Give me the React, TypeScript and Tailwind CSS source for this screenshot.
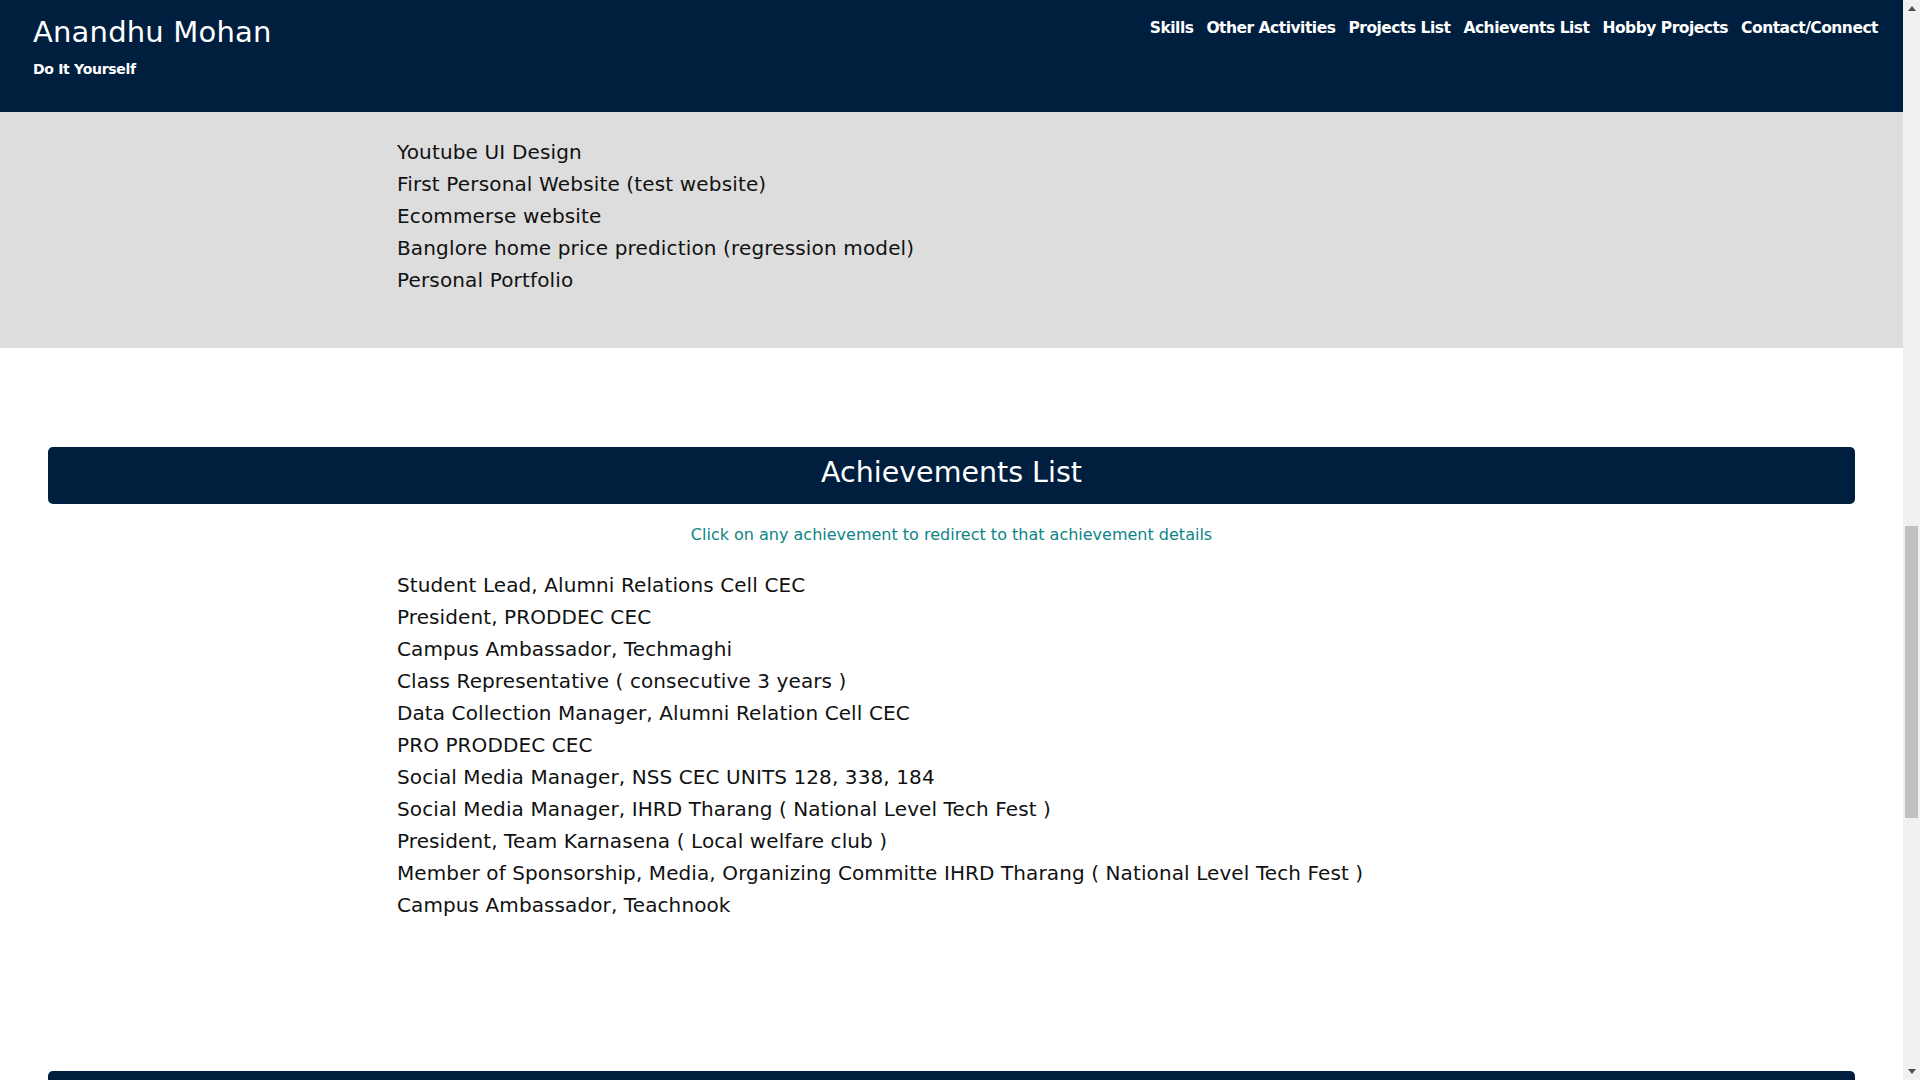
const navLinks = ["Skills", "Other Activities", "Projects List", "Achievents List", "Hobby Projects", "Contact/Connect"]

const projects = [
    "Youtube UI Design",
    "First Personal Website (test website)",
    "Ecommerse website",
    "Banglore home price prediction (regression model)",
    "Personal Portfolio",
]

const achievements = [
    "Student Lead, Alumni Relations Cell CEC",
    "President, PRODDEC CEC",
    "Campus Ambassador, Techmaghi",
    "Class Representative ( consecutive 3 years )",
    "Data Collection Manager, Alumni Relation Cell CEC",
    "PRO PRODDEC CEC",
    "Social Media Manager, NSS CEC UNITS 128, 338, 184",
    "Social Media Manager, IHRD Tharang ( National Level Tech Fest )",
    "President, Team Karnasena ( Local welfare club )",
    "Member of Sponsorship, Media, Organizing Committe IHRD Tharang ( National Level Tech Fest )",
    "Campus Ambassador, Teachnook",
]

const ScrollTrack = () => (
    <div className="w-[17px] shrink-0 bg-[#f1f1f1] flex flex-col items-center">
        <svg width="8" height="5" viewBox="0 0 8 5" className="mt-[6px]"><path d="M4 0 L8 5 L0 5 Z" fill="#505050" /></svg>
        <div className="w-[13px] h-[292px] bg-[#c1c1c1] mt-[515px]" />
        <div className="flex-1" />
        <svg width="8" height="5" viewBox="0 0 8 5" className="mb-[6px]"><path d="M0 0 L8 0 L4 5 Z" fill="#505050" /></svg>
    </div>
)

const App = () => {
    return (
        <div className="h-screen flex overflow-hidden bg-white text-[#111] font-['DejaVu_Sans',sans-serif]">
            <div className="flex-1 min-w-0 overflow-hidden">
                <header className="h-[112px] bg-[#001f3f] text-white flex justify-between pl-[33px] pr-[25px]">
                    <div className="pt-[13px]">
                        <h1 className="text-[29px] leading-[38px] tracking-[0.2px]">Anandhu Mohan</h1>
                        <p className="text-[14px] font-semibold mt-[8px] tracking-[-0.3px]">Do It Yourself</p>
                    </div>
                    <nav className="flex gap-[13px] pt-[17px]">
                        {navLinks.map((l) => (
                            <a key={l} href="#" className="text-[15.5px] font-semibold tracking-[-0.5px] h-[22px]">{l}</a>
                        ))}
                    </nav>
                </header>

                <section className="bg-[#dddddd] pt-6 pb-[52px]">
                    <ul className="ml-[397px] text-[20px] leading-[32px] tracking-[0.15px]">
                        {projects.map((p) => <li key={p}>{p}</li>)}
                    </ul>
                </section>

                <section className="px-12 pt-[99px]">
                    <div className="h-[57px] bg-[#001f3f] rounded-[5px] flex items-center justify-center">
                        <h2 className="text-white text-[28.5px] pb-[4px]">Achievements List</h2>
                    </div>
                    <p className="text-center text-[#0d8585] text-[16px] mt-[20px] leading-[22px]">Click on any achievement to redirect to that achievement details</p>
                    <ul className="ml-[349px] mt-[23px] text-[20px] leading-[32px] tracking-[0.1px]">
                        {achievements.map((a) => <li key={a}>{a}</li>)}
                    </ul>
                </section>

                <section className="px-12 pt-[150px]">
                    <div className="h-[57px] bg-[#001f3f] rounded-[5px]" />
                </section>
            </div>
            <ScrollTrack />
        </div>
    )
}
export default App
